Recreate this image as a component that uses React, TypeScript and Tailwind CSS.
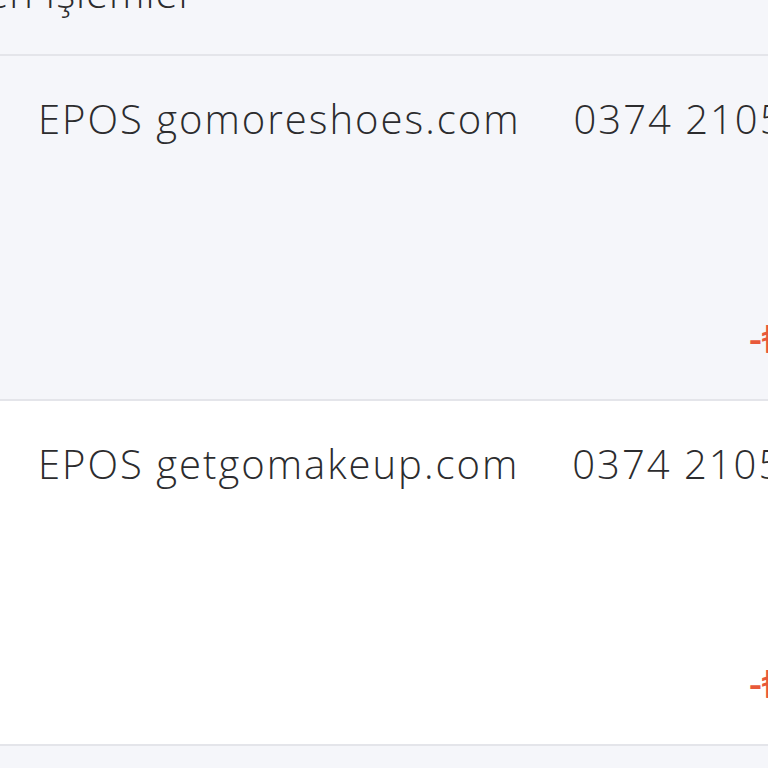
const ROWS = [
  { merchant: 'EPOS gomoreshoes.com', card: '0374 2105 **** 1204', amount: '-₺249,90', bg: 'bg-[#f5f6fa]' },
  { merchant: 'EPOS getgomakeup.com', card: '0374 2105 **** 1204', amount: '-₺189,50', bg: 'bg-white' },
]

function TxRow({ merchant, card, amount, bg }: (typeof ROWS)[number]) {
  return (
    <div className={`${bg} flex h-[345px] flex-col border-b-2 border-[#e4e5ea] pl-[38px] pt-[43px]`}>
      <div className="flex gap-[53px] whitespace-nowrap text-[40px] leading-none tracking-[2px] text-[#2c2c2e]">
        <span>{merchant}</span>
        <span>{card}</span>
      </div>
      <div className="ml-[711px] mt-[179px] whitespace-nowrap text-[40px] font-semibold leading-none text-[#e8593a]">
        {amount}
      </div>
    </div>
  )
}

export default function App() {
  return (
    <div
      className="h-[768px] w-[768px] overflow-hidden bg-[#f5f6fa] font-light"
      style={{ fontFamily: '"Open Sans", "Noto Sans", sans-serif' }}
    >
      <div className="flex h-[56px] flex-col items-start border-b-2 border-[#e4e5ea]">
        <div className="-mt-[27px] flex w-[195px] justify-end whitespace-nowrap text-[40px] leading-none tracking-[1px] text-[#2c2c2e]">
          Bekleyen İşlemler
        </div>
      </div>
      {ROWS.map((r) => (
        <TxRow key={r.merchant} {...r} />
      ))}
    </div>
  )
}
